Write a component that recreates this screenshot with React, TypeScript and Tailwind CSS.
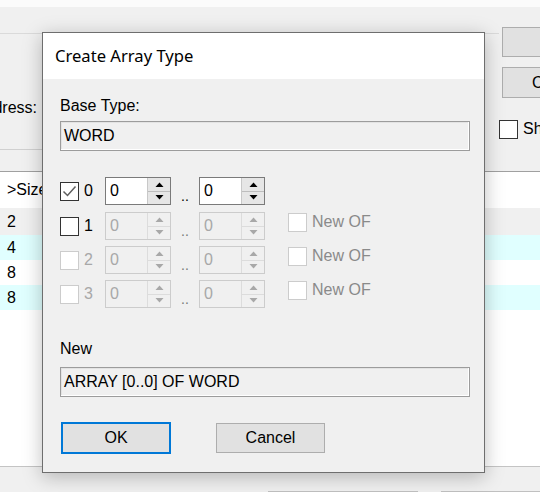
import React from "react";

function Arrow({ up, color }: { up: boolean; color: string }) {
  return (
    <svg width="9" height="5" viewBox="0 0 9 5">
      {up ? <polygon points="0.5,5 8.5,5 4.5,0.5" fill={color} /> : <polygon points="0.5,0 8.5,0 4.5,4.5" fill={color} />}
    </svg>
  );
}

function Spinner({ enabled }: { enabled: boolean }) {
  const arrow = enabled ? "#000000" : "#a8a8a8";
  return (
    <div className={`flex h-[28px] w-[66px] border ${enabled ? "border-[#7a7a7a] bg-white" : "border-[#cccccc] bg-[#f0f0f0]"}`}>
      <div className={`flex flex-1 items-center pl-[4px] text-[16px] ${enabled ? "text-black" : "text-[#a8a8a8]"}`}>0</div>
      <div className={`flex w-[23px] flex-col border-l ${enabled ? "border-[#c8c8c8] bg-[#e6e6e6]" : "border-[#dcdcdc] bg-[#f0f0f0]"}`}>
        <div className={`flex flex-1 items-center justify-center border-b ${enabled ? "border-[#bdbdbd]" : "border-[#dcdcdc]"}`}>
          <Arrow up color={arrow} />
        </div>
        <div className="flex flex-1 items-center justify-center">
          <Arrow up={false} color={arrow} />
        </div>
      </div>
    </div>
  );
}

function Check({ checked, enabled }: { checked?: boolean; enabled: boolean }) {
  return (
    <div className={`flex h-[19px] w-[19px] shrink-0 items-center justify-center border bg-white ${enabled ? "border-[#333333]" : "border-[#cccccc]"}`}>
      {checked && (
        <svg width="17" height="17" viewBox="0 0 17 17">
          <polyline points="2.5,8.5 6.5,12.5 14.5,3.5" fill="none" stroke="#5f5f5f" strokeWidth="1.5" />
        </svg>
      )}
    </div>
  );
}

function DimRow({ idx, enabled, checked, newOf }: { idx: number; enabled: boolean; checked?: boolean; newOf: boolean }) {
  return (
    <div className="flex h-[28px]">
      <div className="flex items-center">
        <Check checked={checked} enabled={idx <= 1} />
        <div className={`w-[26px] pl-[5px] text-[16px] ${idx <= 1 ? "text-black" : "text-[#a8a8a8]"}`}>{idx}</div>
      </div>
      <Spinner enabled={enabled} />
      <div className={`flex w-[28px] items-end justify-center pb-[2px] text-[14px] leading-[14px] ${enabled ? "text-black" : "text-[#777777]"}`}>..</div>
      <Spinner enabled={enabled} />
      {newOf && (
        <div className="ml-[23px] flex h-[20px] items-center">
          <Check enabled={false} />
          <span className="pl-[5px] text-[16px] text-[#8a8a8a]">New OF</span>
        </div>
      )}
    </div>
  );
}

export default function App() {
  return (
    <div className="relative h-[492px] w-[540px] overflow-hidden bg-[#f0f0f0] font-['Liberation_Sans',Arial,sans-serif] text-[16px] text-black">
      {/* background window */}
      <div className="h-[7px] bg-[#fbfbfb]" />
      <div className="flex h-[164px]">
        <div className="flex w-[499px] shrink-0 flex-col">
          <div className="h-[26px]" />
          <div className="h-px w-full bg-[#dadada]" />
          <div className="h-[65px]" />
          <div className="flex w-[37px] justify-end overflow-hidden whitespace-nowrap leading-[18px]">Address:</div>
          <div className="h-[32px]" />
          <div className="h-px w-[470px] bg-[#d0d0d0]" />
        </div>
        <div className="flex min-w-0 flex-1 flex-col overflow-hidden">
          <div className="ml-[3px] mt-[20px] h-[30px] w-[60px] border border-[#adadad] bg-[#e1e1e1]" />
          <div className="ml-[3px] mt-[10px] h-[31px] w-[80px] whitespace-nowrap border border-[#adadad] bg-[#e1e1e1] pl-[29px] leading-[29px]">Close</div>
          <div className="mt-[19px] flex items-center">
            <Check enabled />
            <span className="whitespace-nowrap pl-[5px]">Show</span>
          </div>
        </div>
      </div>
      <div className="h-px bg-[#a0a0a0]" />
      <div className="flex h-[294px] flex-col bg-white">
        <div className="flex h-[36px] items-center pl-[7px]">&gt;Size</div>
        <div className="flex h-[27px] items-center bg-[#f0f0f0] pl-[7px]">2</div>
        <div className="flex h-[25px] items-center bg-[#e0ffff] pl-[7px]">4</div>
        <div className="flex h-[25px] items-center pl-[7px]">8</div>
        <div className="flex h-[25px] items-center bg-[#e0ffff] pl-[7px]">8</div>
      </div>
      <div className="h-px bg-[#c4c4c4]" />
      <div className="mt-[24px] flex">
        <div className="ml-[268px] h-[10px] w-[150px] border border-[#c0c0c0] bg-[#e8e8e8]" />
        <div className="ml-[23px] h-[10px] flex-1 border border-[#c0c0c0] bg-[#e8e8e8]" />
      </div>

      {/* dialog */}
      <div className="absolute left-[42px] top-[32px] flex h-[441px] w-[443px] flex-col border border-[#6e6e6e] bg-[#f0f0f0] shadow-[0_4px_18px_rgba(0,0,0,0.25)]">
        <div className="flex h-[46px] items-center bg-white pl-[12px] font-['Noto_Sans',sans-serif] text-[16.6px] text-black">Create Array Type</div>
        <div className="flex flex-col pl-[17px]">
          <div className="mt-[18px] leading-[18px]">Base Type:</div>
          <div className="mt-[6px] flex h-[30px] w-[410px] items-center border border-[#9c9c9c] bg-[#f0f0f0] pl-[3px] shadow-[inset_-1px_-1px_0_#ffffff,inset_1px_1px_0_#e3e3e3]">WORD</div>
          <div className="mt-[26px]">
            <DimRow idx={0} enabled checked newOf={false} />
          </div>
          <div className="mt-[7px]">
            <DimRow idx={1} enabled={false} newOf />
          </div>
          <div className="mt-[6px]">
            <DimRow idx={2} enabled={false} newOf />
          </div>
          <div className="mt-[6px]">
            <DimRow idx={3} enabled={false} newOf />
          </div>
          <div className="mt-[32px] leading-[18px]">New</div>
          <div className="mt-[9px] flex h-[30px] w-[410px] items-center border border-[#9c9c9c] bg-[#f0f0f0] pl-[3px] shadow-[inset_-1px_-1px_0_#ffffff,inset_1px_1px_0_#e3e3e3]">ARRAY [0..0] OF WORD</div>
          <div className="mt-[25px] flex">
            <div className="ml-[1px] flex h-[32px] w-[110px] items-center justify-center border-2 border-[#0078d7] bg-[#e1e1e1]">OK</div>
            <div className="ml-[45px] mt-[1px] flex h-[30px] w-[109px] items-center justify-center border border-[#adadad] bg-[#e1e1e1]">Cancel</div>
          </div>
        </div>
      </div>
    </div>
  );
}
